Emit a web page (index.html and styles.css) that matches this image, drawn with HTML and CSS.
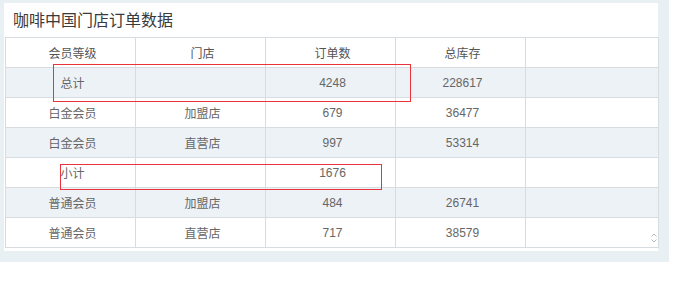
FILE: index.html
```html
<!DOCTYPE html>
<html lang="zh">
<head>
<meta charset="utf-8">
<link rel="stylesheet" href="styles.css">
</head>
<body>
<div class="frame">
  <div class="panel">
    <div class="title">咖啡中国门店订单数据</div>
    <table class="grid">
      <colgroup>
        <col class="c"><col class="c"><col class="c"><col class="c"><col class="last">
      </colgroup>
      <thead>
        <tr><th>会员等级</th><th>门店</th><th>订单数</th><th>总库存</th><th></th></tr>
      </thead>
      <tbody>
        <tr class="alt"><td>总计</td><td></td><td>4248</td><td>228617</td><td></td></tr>
        <tr><td>白金会员</td><td>加盟店</td><td>679</td><td>36477</td><td></td></tr>
        <tr class="alt"><td>白金会员</td><td>直营店</td><td>997</td><td>53314</td><td></td></tr>
        <tr><td>小计</td><td></td><td>1676</td><td></td><td></td></tr>
        <tr class="alt"><td>普通会员</td><td>加盟店</td><td>484</td><td>26741</td><td></td></tr>
        <tr><td>普通会员</td><td>直营店</td><td>717</td><td>38579</td><td></td></tr>
      </tbody>
    </table>
    <div class="mark mark-total"></div>
    <div class="mark mark-sub"></div>
    <svg class="spin" width="6" height="10" viewBox="0 0 6 10">
      <path d="M0.5 3.5 L3 1 L5.5 3.5" fill="none" stroke="#b5bcc2" stroke-width="1"/>
      <path d="M0.5 6.5 L3 9 L5.5 6.5" fill="none" stroke="#b5bcc2" stroke-width="1"/>
    </svg>
  </div>
</div>
</body>
</html>
```

FILE: styles.css
```css
html, body {
  margin: 0;
  padding: 0;
  background: #ffffff;
}
body {
  font-family: "Liberation Sans", "Noto Sans CJK SC", sans-serif;
  width: 678px;
  height: 282px;
  overflow: hidden;
}
.frame {
  width: 654px;
  height: 248px;
  padding: 3px 11px 11px 4px;
  background: #e9f0f4;
}
.panel {
  position: relative;
  width: 654px;
  height: 248px;
  background: #ffffff;
}
.title {
  height: 34px;
  line-height: 33px;
  padding-left: 9px;
  font-size: 16px;
  color: #3a3a3a;
  font-family: "Noto Sans CJK SC", "Liberation Sans", sans-serif;
}
.grid {
  margin-left: 1px;
  border-collapse: collapse;
  table-layout: fixed;
  width: 653px;
  font-size: 12px;
  color: #666666;
}
.grid col.c { width: 130px; }
.grid col.last { width: 133px; }
.grid tr {
  height: 30px;
}
.grid th, .grid td {
  height: 30px;
  padding: 0 0 0 4px;
  border: 1px solid #d6dce0;
  text-align: center;
  vertical-align: middle;
  font-weight: normal;
  box-sizing: border-box;
}
.grid th {
  color: #555555;
}
.grid tr.alt td {
  background: #edf2f6;
}
.mark {
  position: absolute;
  border: 1px solid #e8343a;
  box-sizing: border-box;
}
.mark-total {
  left: 49px;
  top: 61px;
  width: 358px;
  height: 38px;
}
.mark-sub {
  left: 56px;
  top: 161px;
  width: 322px;
  height: 26px;
}
.spin {
  position: absolute;
  left: 647px;
  top: 230px;
}
```
